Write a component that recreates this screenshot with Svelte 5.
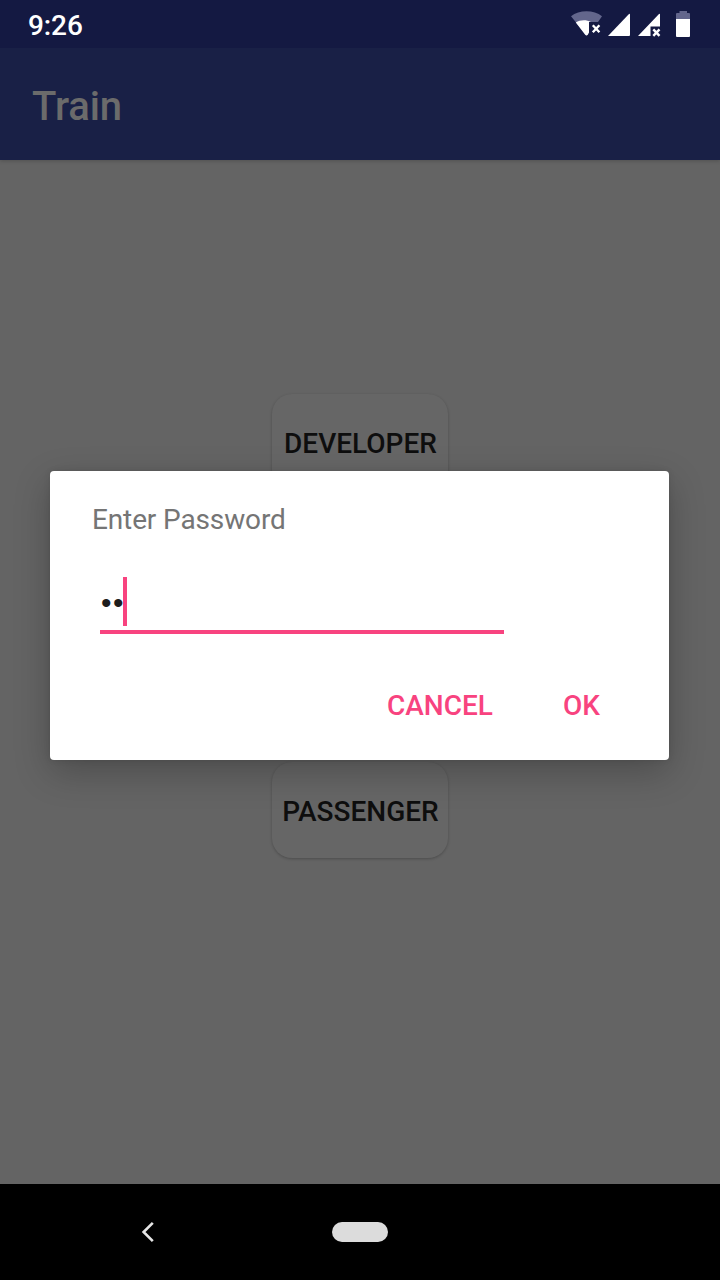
<script>
  let password = $state('••');
</script>

<div class="screen">
  <header class="status">
    <span class="time">9:26</span>
    <svg class="indicators" width="160" height="48" viewBox="0 0 160 48" aria-hidden="true">
      <path d="M11 16.2C19 9.6 34 9.6 42 16.2L38 22H29V32L26.5 35.5Z" fill="#63668c" />
      <path d="M15.8 22.6C20 19.8 26 19.4 31 22H29V32.5L27.8 34.8Q26.5 36 25.2 34.8Z" fill="#fff" />
      <path d="M32.8 25.3L39.4 32.3M39.4 25.3L32.8 32.3" stroke="#fff" stroke-width="2.4" fill="none" />
      <path d="M48 36L69 14Q70 13.4 70 14.5V35Q70 36 69 36Z" fill="#fff" />
      <path d="M78 36L99 14Q100 13.4 100 14.5V26.5H90.5V36Z" fill="#fff" />
      <path d="M93.3 29.3L99.5 35.8M99.5 29.3L93.3 35.8" stroke="#fff" stroke-width="2.4" fill="none" />
      <path d="M116 14Q116 13 117 13H119.5V11H127V13H129Q130 13 130 14V19H116Z" fill="#63668c" />
      <path d="M116 19H130V36Q130 37 129 37H117Q116 37 116 36Z" fill="#fff" />
    </svg>
  </header>
  <div class="appbar"><h1>Train</h1></div>
  <main>
    <button class="choice">DEVELOPER</button>
    <button class="choice">PASSENGER</button>
  </main>
  <nav>
    <svg class="back" width="20" height="24" viewBox="0 0 20 24" aria-label="Back">
      <path d="M14.8 2.8L5.6 12L14.8 21.2" fill="none" stroke="#e6e6e6" stroke-width="2.6" />
    </svg>
    <span class="home"></span>
  </nav>

  <section class="dialog" role="dialog" aria-label="Enter Password">
    <p>Enter Password</p>
    <div class="field"><span class="dots">{password}</span><span class="caret"></span></div>
    <div class="actions">
      <button class="cancel">CANCEL</button>
      <button class="ok">OK</button>
    </div>
  </section>
</div>

<style>
  :global(body) { margin: 0; background: #646464; }
  .screen {
    position: relative;
    display: flex;
    flex-direction: column;
    width: 720px;
    height: 1280px;
    overflow: hidden;
    background: #646464;
    font-family: Roboto, sans-serif;
  }
  button { padding: 0; border: 0; font: inherit; background: none; }
  .status {
    z-index: 2;
    display: flex;
    justify-content: space-between;
    height: 48px;
    padding-left: 28px;
    background: #141942;
    color: #fff;
  }
  .time { padding-top: 10px; font-size: 28px; font-weight: 500; line-height: 32px; letter-spacing: -.1px; }
  .appbar {
    z-index: 1;
    height: 112px;
    padding-left: 32px;
    box-sizing: border-box;
    background: #192046;
    box-shadow: 0 1px 4px rgba(0, 0, 0, .2);
  }
  h1 { margin: 0; padding-top: 35px; color: #6b6b6b; font-size: 40px; font-weight: 500; line-height: 48px; letter-spacing: -.1px; }
  main {
    flex: 1;
    display: flex;
    flex-direction: column;
    align-items: center;
    gap: 272px;
    padding-top: 234px;
  }
  .choice {
    width: 176px;
    height: 96px;
    box-sizing: border-box;
    padding: 4px 0 0 1px;
    border-radius: 20px;
    background: #666;
    box-shadow: 0 1px 3px rgba(0, 0, 0, .24);
    color: #0e0e0e;
    font-size: 28px;
    font-weight: 500;
    line-height: 32px;
  }
  nav { display: flex; align-items: center; height: 96px; background: #000; }
  .back { margin-left: 138px; }
  .home { width: 56px; height: 20px; margin-left: 174px; border-radius: 10px; background: #dcdcdc; }
  .dialog {
    position: absolute;
    left: 50px;
    top: 471px;
    width: 619px;
    height: 289px;
    box-sizing: border-box;
    padding: 33px 42px 0;
    border-radius: 4px;
    background: #fff;
    box-shadow: 0 12px 36px rgba(0, 0, 0, .24), 0 0 6px rgba(0, 0, 0, .1);
  }
  p { margin: 0; color: #757575; font-size: 28px; line-height: 32px; letter-spacing: -.13px; }
  .field {
    display: flex;
    align-items: flex-start;
    width: 404px;
    height: 57px;
    box-sizing: border-box;
    margin: 41px 0 0 8px;
    border-bottom: 4px solid #f8437f;
  }
  .dots {
    width: 23px;
    box-sizing: border-box;
    padding: 5px 0 0 1px;
    font-family: "Liberation Sans", sans-serif;
    font-size: 30px;
    line-height: 42px;
    letter-spacing: 1.5px;
    color: #1d1d1d;
    white-space: nowrap;
  }
  .caret { width: 4px; height: 49px; background: #f8437f; }
  .actions { display: flex; margin-top: 56px; }
  .actions button { color: #f8437f; font-size: 28px; font-weight: 500; line-height: 32px; text-align: left; }
  .cancel { width: 176px; margin-left: 295px; white-space: nowrap; }
  .ok { white-space: nowrap; }
</style>
